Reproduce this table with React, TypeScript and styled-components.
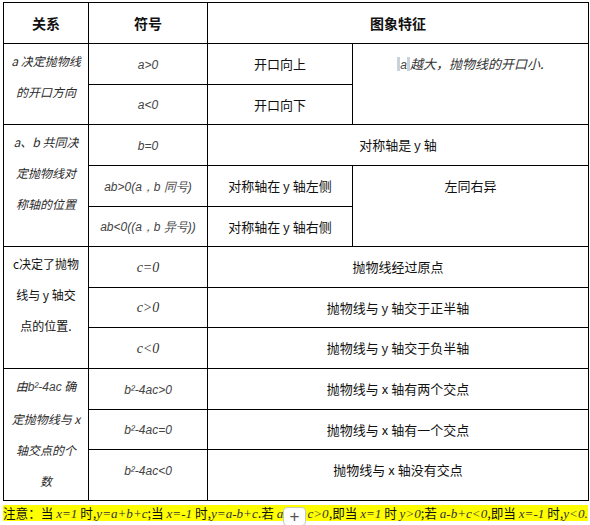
import styled, { createGlobalStyle } from "styled-components";

const GlobalStyle = createGlobalStyle`
  html, body {
    margin: 0;
    padding: 0;
    background: #fff;
  }
  body {
    font-family: "Noto Sans CJK SC", "Liberation Sans", sans-serif;
    color: #111;
  }
`;

const Page = styled.div`
  width: 590px;
  height: 525px;
  overflow: hidden;
  padding: 2px 0 0 3px;
  box-sizing: border-box;
`;

const Table = styled.table`
  border-collapse: collapse;
  table-layout: fixed;
  width: 585px;
`;

const Row = styled.tr<{ $h?: number }>`
  height: ${({ $h }) => $h ?? 41}px;
`;

const Th = styled.th`
  border: 1px solid #000;
  font-size: 14px;
  font-weight: 700;
  text-align: center;
  vertical-align: middle;
  padding: 0;
`;

const Td = styled.td<{ $top?: boolean }>`
  border: 1px solid #000;
  font-size: 13px;
  text-align: center;
  vertical-align: ${({ $top }) => ($top ? "top" : "middle")};
  padding: ${({ $top }) => ($top ? "11px 0 0" : "0")};
  line-height: 18px;
  white-space: nowrap;
`;

const SideCell = styled.td<{ $italic?: boolean }>`
  border: 1px solid #000;
  font-size: 12px;
  font-style: ${({ $italic }) => ($italic ? "italic" : "normal")};
  color: ${({ $italic }) => ($italic ? "#2a2a2a" : "#111")};
  text-align: center;
  vertical-align: top;
  padding: 0;
  line-height: 31px;
  padding-top: 1px;
`;

const MathSans = styled.span`
  font-family: "Liberation Sans", sans-serif;
  font-style: italic;
  color: #444;
  font-size: 12px;
`;

const MathSerif = styled.span`
  font-family: "Liberation Serif", serif;
  font-style: italic;
  color: #333;
  font-size: 14px;
`;

const Ital = styled.span`
  font-style: italic;
  color: #333;
`;

const AbsBar = styled.span`
  display: inline-block;
  width: 3px;
  height: 14px;
  background: #c9d3de;
  vertical-align: -2px;
`;

const NoteWrap = styled.div`
  position: relative;
  display: flex;
  margin-top: 4px;
  height: 17px;
`;

const Note = styled.div`
  background: #ffff00;
  line-height: 16px;
  height: 16px;
  font-size: 12.6px;
  white-space: nowrap;
  color: #111;
`;

const NoteMath = styled.span`
  font-family: "Liberation Serif", serif;
  font-style: italic;
  font-size: 13.1px;
  color: #333;
`;

const AddButton = styled.div`
  position: absolute;
  left: 280px;
  top: 2px;
  width: 23px;
  height: 19px;
  box-sizing: border-box;
  background: #fff;
  border: 1px solid #c8c8c8;
  border-radius: 4px;
  color: #555;
  font-family: "Liberation Sans", sans-serif;
  font-size: 17px;
  line-height: 18px;
  text-align: center;
`;

export default function App() {
  return (
    <>
      <GlobalStyle />
      <Page>
        <Table>
          <colgroup>
            <col style={{ width: 85 }} />
            <col style={{ width: 119 }} />
            <col style={{ width: 145 }} />
            <col style={{ width: 236 }} />
          </colgroup>
          <tbody>
            <Row>
              <Th>关系</Th>
              <Th>符号</Th>
              <Th colSpan={2}>图象特征</Th>
            </Row>

            <Row>
              <SideCell rowSpan={2} $italic>
                a 决定抛物线
                <br />
                的开口方向
              </SideCell>
              <Td><MathSans>a&gt;0</MathSans></Td>
              <Td>开口向上</Td>
              <Td rowSpan={2} $top>
                <AbsBar />
                <MathSans>a</MathSans>
                <AbsBar />
                <Ital>越大，抛物线的开口小.</Ital>
              </Td>
            </Row>
            <Row $h={40}>
              <Td><MathSans>a&lt;0</MathSans></Td>
              <Td>开口向下</Td>
            </Row>

            <Row>
              <SideCell rowSpan={3} $italic>
                a、b 共同决
                <br />
                定抛物线对
                <br />
                称轴的位置
              </SideCell>
              <Td><MathSans>b=0</MathSans></Td>
              <Td colSpan={2}>对称轴是 y 轴</Td>
            </Row>
            <Row>
              <Td><MathSans>ab&gt;0(a，b 同号)</MathSans></Td>
              <Td>对称轴在 y 轴左侧</Td>
              <Td rowSpan={2} $top>左同右异</Td>
            </Row>
            <Row $h={40}>
              <Td><MathSans>ab&lt;0((a，b 异号))</MathSans></Td>
              <Td>对称轴在 y 轴右侧</Td>
            </Row>

            <Row>
              <SideCell rowSpan={3}>
                c决定了抛物
                <br />
                线与 y 轴交
                <br />
                点的位置.
              </SideCell>
              <Td><MathSerif>c=0</MathSerif></Td>
              <Td colSpan={2}>抛物线经过原点</Td>
            </Row>
            <Row $h={40}>
              <Td><MathSerif>c&gt;0</MathSerif></Td>
              <Td colSpan={2}>抛物线与 y 轴交于正半轴</Td>
            </Row>
            <Row>
              <Td><MathSerif>c&lt;0</MathSerif></Td>
              <Td colSpan={2}>抛物线与 y 轴交于负半轴</Td>
            </Row>

            <Row>
              <SideCell rowSpan={3} $italic>
                由<MathSans>b²-4ac</MathSans> 确
                <br />
                定抛物线与 x
                <br />
                轴交点的个
                <br />
                数
              </SideCell>
              <Td><MathSans>b²-4ac&gt;0</MathSans></Td>
              <Td colSpan={2}>抛物线与 x 轴有两个交点</Td>
            </Row>
            <Row $h={40}>
              <Td><MathSans>b²-4ac=0</MathSans></Td>
              <Td colSpan={2}>抛物线与 x 轴有一个交点</Td>
            </Row>
            <Row $h={51}>
              <Td $top><MathSans>b²-4ac&lt;0</MathSans></Td>
              <Td colSpan={2} $top>抛物线与 x 轴没有交点</Td>
            </Row>
          </tbody>
        </Table>

        <NoteWrap>
          <Note>
            注意：当 <NoteMath>x=1</NoteMath> 时,<NoteMath>y=a+b+c</NoteMath>;当{" "}
            <NoteMath>x=-1</NoteMath> 时,<NoteMath>y=a-b+c</NoteMath>.若{" "}
            <NoteMath>a+b+c&gt;0</NoteMath>,即当 <NoteMath>x=1</NoteMath> 时{" "}
            <NoteMath>y&gt;0</NoteMath>;若 <NoteMath>a-b+c&lt;0</NoteMath>,即当{" "}
            <NoteMath>x=-1</NoteMath> 时,<NoteMath>y&lt;0.</NoteMath>
          </Note>
          <AddButton>+</AddButton>
        </NoteWrap>
      </Page>
    </>
  );
}
